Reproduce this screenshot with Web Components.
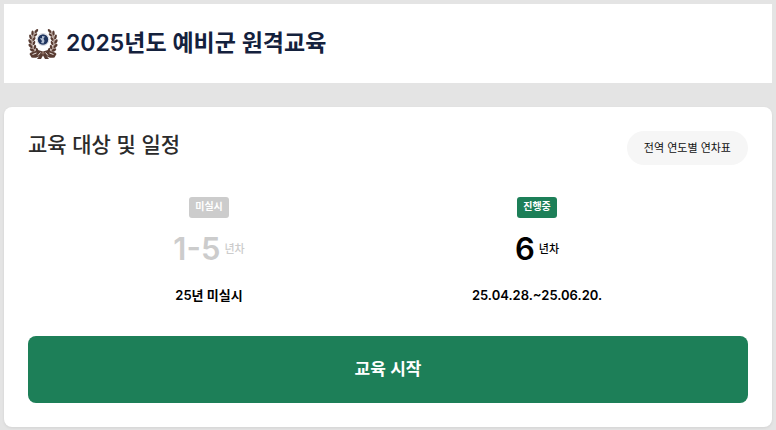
<!DOCTYPE html>
<html lang="ko">
<head>
<meta charset="UTF-8">
<meta name="viewport" content="width=device-width, initial-scale=1">
<title>2025년도 예비군 원격교육</title>
<style>
    :root {
        --green: #1d7f58;
        --muted: #cccccc;
        --navy: #14213d;
    }
    body {
        margin: 0;
        padding: 4px 4px 3px;
        background: #e4e4e4;
        color: #000;
        font-family: Inter, "Noto Sans CJK KR", sans-serif;
    }
</style>
</head>
<body>

<page-header>2025년도 예비군 원격교육</page-header>

<training-card>
    <span slot="title">교육 대상 및 일정</span>
    <pill-button slot="action">전역 연도별 연차표</pill-button>
    <year-status status="미실시" years="1-5" off>25년 미실시</year-status>
    <year-status status="진행중" years="6">25.04.28.~25.06.20.</year-status>
    <start-button slot="footer">교육 시작</start-button>
</training-card>

<script>
class ForceEmblem extends HTMLElement {
    constructor() {
        super();
        this.attachShadow({ mode: 'open' });
        // one branch, drawn twice: the right side is the left one mirrored
        this.shadowRoot.innerHTML = `
            <style>
                :host { display: block; width: 30px; height: 30px; }
                svg { display: block; }
            </style>
            <svg width="30" height="30" viewBox="0 0 60 60" aria-hidden="true">
                <defs>
                    <g id="branch">
                        <path d="M16 3C7 14 5 31 12 42c3 5 7 7 13 9" fill="none" stroke="#b9a59c" stroke-width="4"/>
                        <g fill="#593c32">
                            <ellipse cx="17" cy="4" rx="2.4" ry="4.5" transform="rotate(35 17 4)"/>
                            <ellipse cx="9" cy="8" rx="2.4" ry="5" transform="rotate(5 9 8)"/>
                            <ellipse cx="15" cy="12" rx="2.2" ry="4.5" transform="rotate(45 15 12)"/>
                            <ellipse cx="5" cy="16" rx="2.5" ry="5" transform="rotate(-15 5 16)"/>
                            <ellipse cx="12" cy="20" rx="2.2" ry="4.5" transform="rotate(35 12 20)"/>
                            <ellipse cx="4" cy="25" rx="2.6" ry="5" transform="rotate(-25 4 25)"/>
                            <ellipse cx="12" cy="28" rx="2.2" ry="4.5" transform="rotate(20 12 28)"/>
                            <ellipse cx="5" cy="34" rx="2.6" ry="5" transform="rotate(-40 5 34)"/>
                            <ellipse cx="14" cy="36" rx="2.4" ry="4.5" transform="rotate(5 14 36)"/>
                            <ellipse cx="8" cy="42" rx="2.6" ry="5" transform="rotate(-60 8 42)"/>
                            <ellipse cx="18" cy="42" rx="2.4" ry="4.5" transform="rotate(-20 18 42)"/>
                            <path d="M3 50c2-5 12-4 17-8l10 3-5 8c-6 5-12 5-18 4z"/>
                            <path d="M28 47l-10 13h8l5-9z"/>
                        </g>
                        <path d="M9 51l8-3M20 53l5-6" stroke="#e7ddd8" stroke-width="2"/>
                    </g>
                </defs>
                <use href="#branch"/>
                <use href="#branch" transform="matrix(-1 0 0 1 60 0)"/>
                <circle cx="30" cy="21" r="12" fill="#fff" stroke="#c9cbd6" stroke-width="1.5"/>
                <circle cx="30" cy="21" r="10.5" fill="#213660"/>
                <path d="M28 14l6 1-3 4 2 5-2 5-5-1 2-4-4-5 2-1 2 1z" fill="#b3bfd3"/>
                <circle cx="30" cy="48" r="3" fill="#8a6a5d"/>
            </svg>
        `;
    }
}

class PageHeader extends HTMLElement {
    constructor() {
        super();
        this.attachShadow({ mode: 'open' });
        this.shadowRoot.innerHTML = `
            <style>
                :host { display: block; background: #fff; margin-bottom: 24px; }
                header { display: flex; align-items: center; gap: 8px; padding: 24px; }
                h1 {
                    margin: 0;
                    font-size: 23px;
                    line-height: 31px;
                    font-weight: 600;
                    color: var(--navy);
                }
            </style>
            <header>
                <force-emblem></force-emblem>
                <h1><slot></slot></h1>
            </header>
        `;
    }
}

class TrainingCard extends HTMLElement {
    constructor() {
        super();
        this.attachShadow({ mode: 'open' });
        this.shadowRoot.innerHTML = `
            <style>
                :host {
                    display: block;
                    padding: 24px;
                    background: #fff;
                    border-radius: 8px;
                    box-shadow: 0 1px 3px rgba(0, 0, 0, 0.08);
                }
                .top { display: flex; justify-content: space-between; align-items: flex-start; }
                h2 {
                    margin: 0;
                    font-size: 21px;
                    line-height: 28px;
                    font-weight: 500;
                    color: #2b2b2b;
                }
                .years {
                    display: grid;
                    grid-template-columns: 1fr 1fr;
                    padding: 32px 47px 30px 17px;
                }
            </style>
            <section>
                <div class="top">
                    <h2><slot name="title"></slot></h2>
                    <slot name="action"></slot>
                </div>
                <div class="years"><slot></slot></div>
                <slot name="footer"></slot>
            </section>
        `;
    }
}

class PillButton extends HTMLElement {
    constructor() {
        super();
        this.attachShadow({ mode: 'open' });
        this.shadowRoot.innerHTML = `
            <style>
                :host { display: block; }
                button {
                    display: block;
                    padding: 8px 17px;
                    border: 0;
                    border-radius: 17px;
                    background: #f6f6f6;
                    color: #111;
                    font: inherit;
                    font-size: 11px;
                    line-height: 18px;
                    cursor: pointer;
                }
            </style>
            <button type="button"><slot></slot></button>
        `;
    }
}

class YearStatus extends HTMLElement {
    constructor() {
        super();
        this.attachShadow({ mode: 'open' });
        this.shadowRoot.innerHTML = `
            <style>
                :host {
                    display: flex;
                    flex-direction: column;
                    align-items: center;
                    --tone: #000;
                    --badge: var(--green);
                }
                :host([off]) { --tone: var(--muted); --badge: var(--muted); }
                .badge {
                    padding: 0 6px 3px;
                    border-radius: 3px;
                    background: var(--badge);
                    color: #fff;
                    font-size: 10px;
                    line-height: 18px;
                    font-weight: 600;
                }
                .year {
                    display: flex;
                    align-items: center;
                    gap: 4px;
                    margin: 12px 0 16px;
                    color: var(--tone);
                    font-size: 11px;
                    line-height: 38px;
                    font-weight: 500;
                }
                .year b { font-size: 31px; font-weight: 600; }
                .period { font-size: 13px; line-height: 22px; font-weight: 600; }
            </style>
            <span class="badge"></span>
            <div class="year"><b></b><span>년차</span></div>
            <div class="period"><slot></slot></div>
        `;
    }

    connectedCallback() {
        this.shadowRoot.querySelector('.badge').textContent = this.getAttribute('status');
        this.shadowRoot.querySelector('b').textContent = this.getAttribute('years');
    }
}

class StartButton extends HTMLElement {
    constructor() {
        super();
        this.attachShadow({ mode: 'open' });
        this.shadowRoot.innerHTML = `
            <style>
                :host { display: block; }
                button {
                    display: block;
                    width: 100%;
                    padding: 20px;
                    border: 0;
                    border-radius: 8px;
                    background: var(--green);
                    color: #fff;
                    font: inherit;
                    font-size: 17px;
                    line-height: 27px;
                    font-weight: 600;
                    cursor: pointer;
                }
            </style>
            <button type="button"><slot></slot></button>
        `;
    }
}

customElements.define('force-emblem', ForceEmblem);
customElements.define('page-header', PageHeader);
customElements.define('pill-button', PillButton);
customElements.define('year-status', YearStatus);
customElements.define('start-button', StartButton);
customElements.define('training-card', TrainingCard);
</script>
</body>
</html>
